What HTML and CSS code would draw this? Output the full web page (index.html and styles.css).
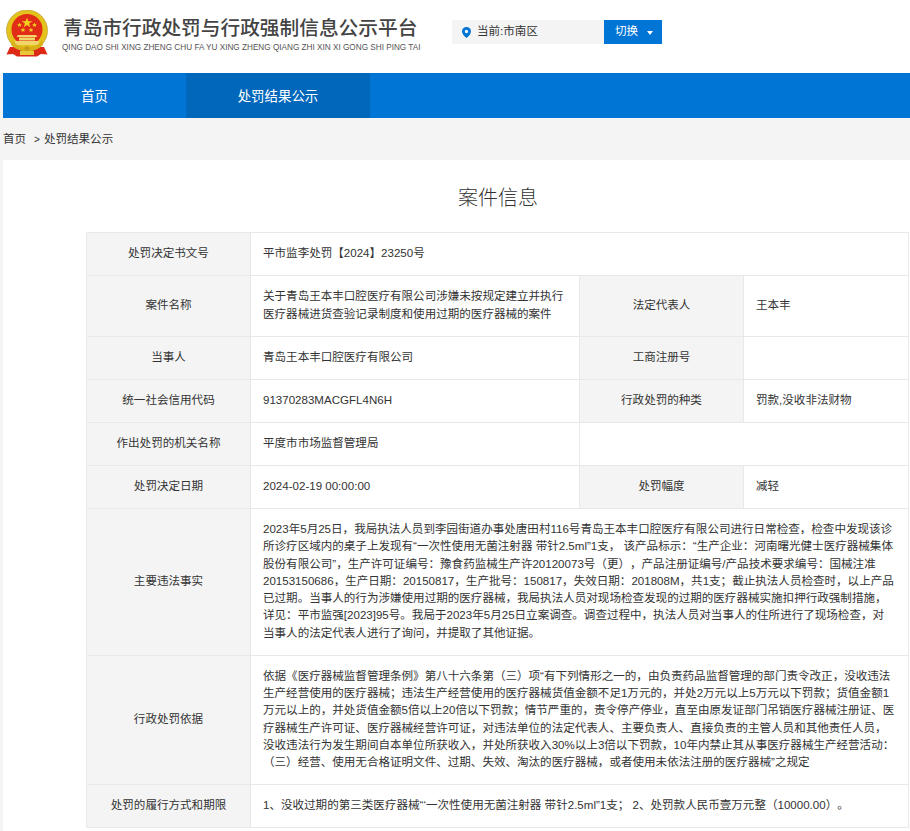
FILE: index.html
```html
<!DOCTYPE html>
<html lang="zh-CN">
<head>
<meta charset="utf-8">
<title>案件信息</title>
<link rel="stylesheet" href="styles.css">
</head>
<body>
<header class="header">
  <svg class="emblem" viewBox="0 0 44 47" width="44" height="47" aria-hidden="true">
    <path d="M5 37 L1.5 44.5 L8 44 L12 46.5 L32 46.5 L36 44 L42.5 44.5 L39 37 Z" fill="#dc2a17"/>
    <circle cx="22" cy="20.5" r="20.5" fill="#e3c21c"/>
    <circle cx="22" cy="20.5" r="20.5" fill="none" stroke="#c2a53a" stroke-width="0.8"/>
    <circle cx="22" cy="19.5" r="15.5" fill="#e12c17"/>
    <polygon points="22,7.6 23.3,11.3 27.2,11.3 24.1,13.6 25.2,17.3 22,15.1 18.8,17.3 19.9,13.6 16.8,11.3 20.7,11.3" fill="#f3d21f"/>
    <polygon points="14.5,12.6 15.2,14.2 16.9,14.3 15.6,15.4 16,17 14.5,16.1 13,17 13.4,15.4 12.1,14.3 13.8,14.2" fill="#f3d21f"/>
    <polygon points="29.5,12.6 30.2,14.2 31.9,14.3 30.6,15.4 31,17 29.5,16.1 28,17 28.4,15.4 27.1,14.3 28.8,14.2" fill="#f3d21f"/>
    <polygon points="18,17.6 18.7,19.2 20.4,19.3 19.1,20.4 19.5,22 18,21.1 16.5,22 16.9,20.4 15.6,19.3 17.3,19.2" fill="#f3d21f"/>
    <polygon points="26,17.6 26.7,19.2 28.4,19.3 27.1,20.4 27.5,22 26,21.1 24.5,22 24.9,20.4 23.6,19.3 25.3,19.2" fill="#f3d21f"/>
    <path d="M13 25 H31 L32.5 27 H11.5 Z M14 27.5 H30 V30.5 H14 Z M10 31 H34 V35 H10 Z" fill="#efd56a"/>
    <path d="M7 30 Q11 37 22 37.5 Q33 37 37 30 L38 35 Q32 41 22 41 Q12 41 6 35 Z" fill="#d8b01a"/>
    <rect x="15" y="41" width="14" height="4" fill="#e8c63a"/>
    <circle cx="22" cy="38.5" r="2.6" fill="#c99a18"/>
  </svg>
  <div class="brand">
    <div class="brand-title">青岛市行政处罚与行政强制信息公示平台</div>
    <div class="brand-sub">QING DAO SHI XING ZHENG CHU FA YU XING ZHENG QIANG ZHI XIN XI GONG SHI PING TAI</div>
  </div>
  <div class="location">
    <div class="location-current">
      <svg class="pin" viewBox="0 0 10 12" width="9" height="11" aria-hidden="true">
        <path fill-rule="evenodd" d="M5 0 C2.2 0 0 2.1 0 4.8 C0 7.6 3 10.4 5 12 C7 10.4 10 7.6 10 4.8 C10 2.1 7.8 0 5 0 Z M5 3 A1.9 1.9 0 1 1 5 6.8 A1.9 1.9 0 1 1 5 3 Z" fill="#0075d5"/>
      </svg>
      <span>当前:市南区</span>
    </div>
    <button class="switch" type="button">切换<i class="caret"></i></button>
  </div>
</header>
<nav class="nav">
  <a class="nav-item">首页</a>
  <a class="nav-item nav-item-active">处罚结果公示</a>
</nav>
<div class="crumbs"><span>首页</span><span class="crumb-sep">&gt;</span><span>处罚结果公示</span></div>
<main class="content">
  <h1 class="case-title">案件信息</h1>
  <table class="case-table">
    <colgroup><col class="col-label"><col class="col-value"><col class="col-label"><col class="col-last"></colgroup>
    <tbody>
      <tr class="row-s"><th>处罚决定书文号</th><td colspan="3">平市监李处罚【2024】23250号</td></tr>
      <tr class="row-m"><th>案件名称</th><td>关于青岛王本丰口腔医疗有限公司涉嫌未按规定建立并执行医疗器械进货查验记录制度和使用过期的医疗器械的案件</td><th>法定代表人</th><td>王本丰</td></tr>
      <tr class="row-s"><th>当事人</th><td>青岛王本丰口腔医疗有限公司</td><th>工商注册号</th><td></td></tr>
      <tr class="row-s"><th>统一社会信用代码</th><td>91370283MACGFL4N6H</td><th>行政处罚的种类</th><td>罚款,没收非法财物</td></tr>
      <tr class="row-s"><th>作出处罚的机关名称</th><td>平度市市场监督管理局</td><td colspan="2"></td></tr>
      <tr class="row-s"><th>处罚决定日期</th><td>2024-02-19 00:00:00</td><th>处罚幅度</th><td>减轻</td></tr>
      <tr class="row-l"><th>主要违法事实</th><td class="long" colspan="3">2023年5月25日，我局执法人员到李园街道办事处唐田村116号青岛王本丰口腔医疗有限公司进行日常检查，检查中发现该诊<br>所诊疗区域内的桌子上发现有“一次性使用无菌注射器 带针2.5ml”1支， 该产品标示：“生产企业：河南曙光健士医疗器械集体<br>股份有限公司”，生产许可证编号：豫食药监械生产许20120073号（更），产品注册证编号/产品技术要求编号：国械注准<br>20153150686，生产日期：20150817，生产批号：150817，失效日期：201808M，共1支；截止执法人员检查时，以上产品<br>已过期。当事人的行为涉嫌使用过期的医疗器械，我局执法人员对现场检查发现的过期的医疗器械实施扣押行政强制措施，<br>详见：平市监强[2023]95号。我局于2023年5月25日立案调查。调查过程中，执法人员对当事人的住所进行了现场检查，对<br>当事人的法定代表人进行了询问，并提取了其他证据。</td></tr>
      <tr class="row-k"><th>行政处罚依据</th><td class="long" colspan="3">依据《医疗器械监督管理条例》第八十六条第（三）项“有下列情形之一的，由负责药品监督管理的部门责令改正，没收违法<br>生产经营使用的医疗器械；违法生产经营使用的医疗器械货值金额不足1万元的，并处2万元以上5万元以下罚款；货值金额1<br>万元以上的，并处货值金额5倍以上20倍以下罚款；情节严重的，责令停产停业，直至由原发证部门吊销医疗器械注册证、医<br>疗器械生产许可证、医疗器械经营许可证，对违法单位的法定代表人、主要负责人、直接负责的主管人员和其他责任人员，<br>没收违法行为发生期间自本单位所获收入，并处所获收入30%以上3倍以下罚款，10年内禁止其从事医疗器械生产经营活动：<br>（三）经营、使用无合格证明文件、过期、失效、淘汰的医疗器械，或者使用未依法注册的医疗器械”之规定</td></tr>
      <tr class="row-s"><th>处罚的履行方式和期限</th><td colspan="3">1、没收过期的第三类医疗器械“‘一次性使用无菌注射器 带针2.5ml”1支； 2、处罚款人民币壹万元整（10000.00）。</td></tr>
    </tbody>
  </table>
</main>
</body>
</html>
```
FILE: styles.css
```css
* { box-sizing: border-box; }
html, body { margin: 0; padding: 0; }
body {
  width: 910px;
  background: #f4f4f4;
  color: #333;
  font-family: "Liberation Sans", "Noto Sans CJK SC", sans-serif;
  font-size: 11.56px;
  line-height: 17.28px;
  text-spacing-trim: space-all;
}
.header {
  height: 73px;
  background: #fff;
  display: flex;
  align-items: flex-start;
  padding: 10px 0 0 5px;
}
.emblem { flex: none; }
.brand { margin-left: 14px; width: 389px; flex: none; }
.brand-title {
  margin-top: 5px;
  font-size: 19.7px;
  line-height: 26px;
  font-weight: 500;
  color: #444;
  white-space: nowrap;
}
.brand-sub {
  margin-top: 1px;
  margin-left: -1px;
  font-size: 8.2px;
  line-height: 12px;
  color: #555;
  white-space: nowrap;
}
.location { display: flex; height: 24px; margin-top: 10px; }
.location-current {
  width: 152px;
  background: #f4f4f4;
  display: flex;
  align-items: center;
  padding-left: 10px;
  gap: 6px;
}
.pin { flex: none; }
.switch {
  width: 58px;
  border: 0;
  padding: 0 0 0 11px;
  background: #0075d5;
  color: #fff;
  font: inherit;
  display: flex;
  align-items: center;
}
.caret {
  margin: 2px 0 0 9px;
  border-top: 4px solid #fff;
  border-left: 3px solid transparent;
  border-right: 3px solid transparent;
}
.nav {
  margin-left: 3px;
  height: 45px;
  background: #0075d5;
  display: flex;
}
.nav-item {
  color: #fff;
  font-size: 13.44px;
  line-height: 47px;
  text-align: center;
  width: 183px;
}
.nav-item-active { background: #0067bb; width: 184px; }
.crumbs {
  height: 42px;
  padding: 2px 0 0 3px;
  display: flex;
  align-items: center;
}
.crumb-sep { margin: 0 4px 0 8px; font-size: 10px; }
.content {
  margin-left: 3px;
  padding: 0 0 3px 83px;
  background: #fff;
}
.case-title {
  margin: 0;
  height: 72px;
  font-size: 20px;
  font-weight: 300;
  line-height: 76px;
  text-align: center;
}
.case-table {
  width: 823px;
  table-layout: fixed;
  border-collapse: collapse;
  border: 1px solid #e8e8e8;
}
.col-label { width: 164px; }
.col-value { width: 329px; }
.col-last { width: 165px; }
.case-table th, .case-table td {
  border: 1px solid #e8e8e8;
  padding: 0 12px 1px;
  font-weight: 400;
  vertical-align: middle;
}
.case-table th { background: #f4f4f4; text-align: center; }
.case-table td { text-align: left; }
.case-table .long { white-space: nowrap; }
.row-s { height: 43px; }
.row-m { height: 61px; }
.row-l { height: 147px; }
.row-k { height: 129px; }
```
